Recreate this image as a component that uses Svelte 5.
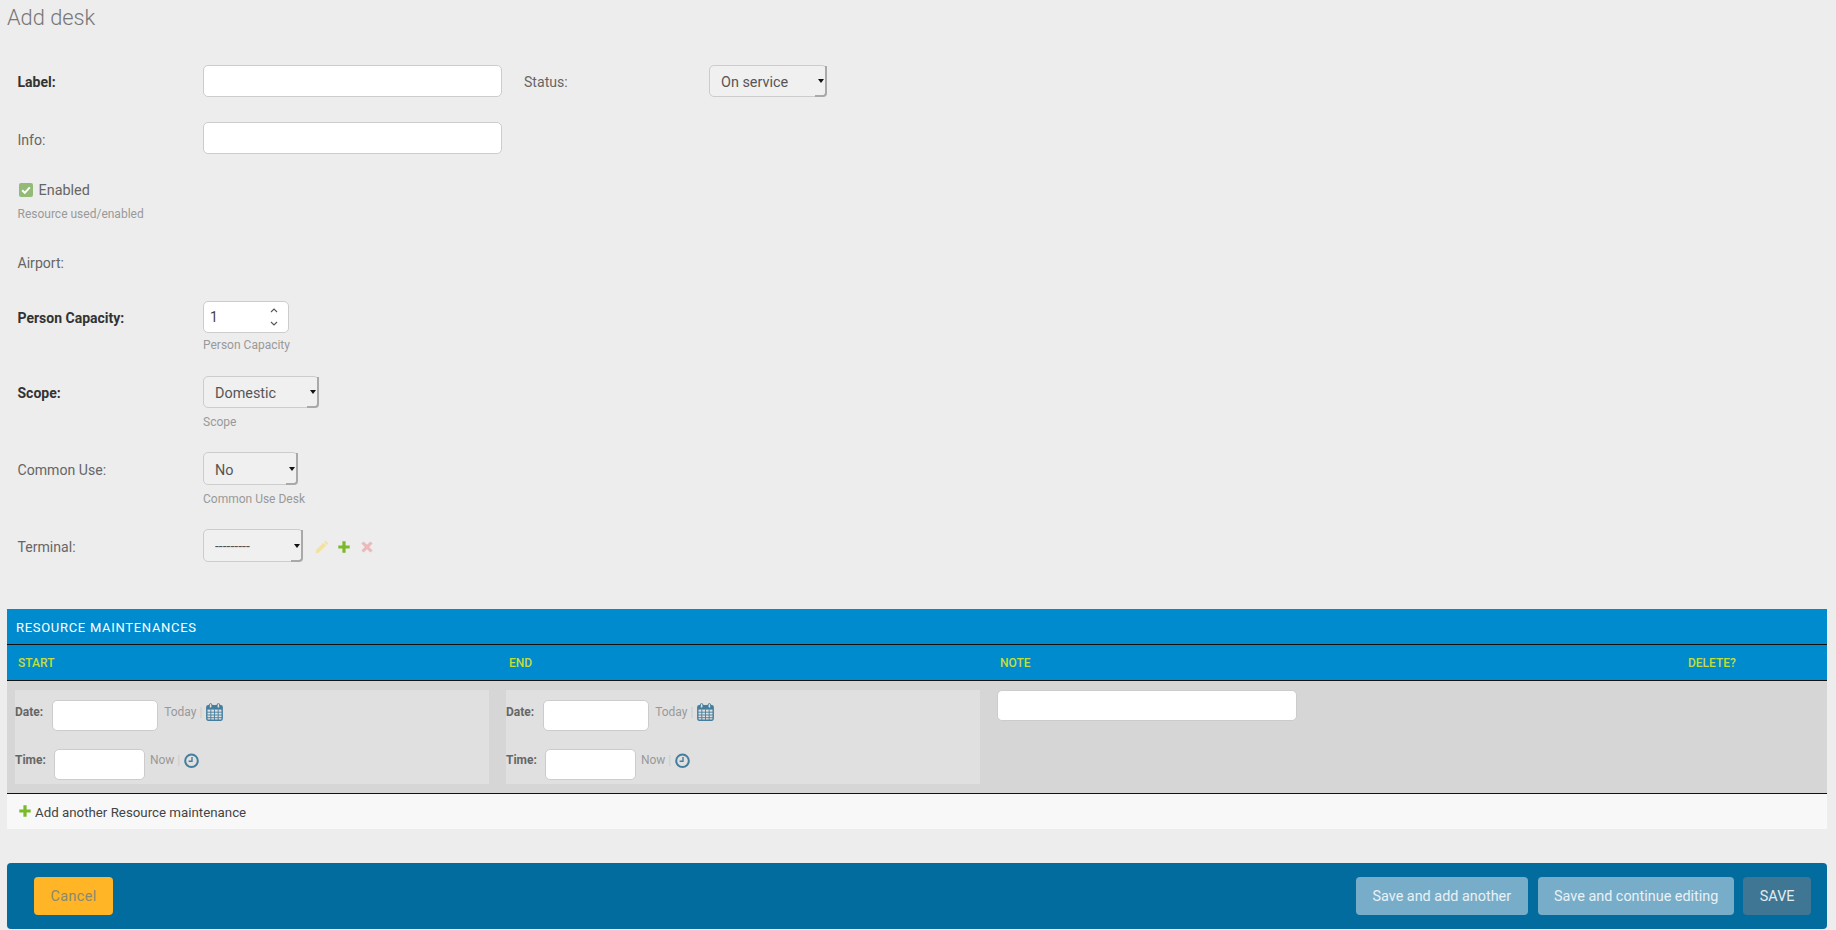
<script>
	const columns = ['Start', 'End', 'Note', 'Delete?'];
</script>

{#snippet plusIcon(size)}
	<svg class="plus" width={size} height={size} viewBox="0 0 12 12" aria-hidden="true">
		<path d="M4.4 0.3h3.2v4.1h4.1v3.2H7.6v4.1H4.4V7.6H0.3V4.4h4.1z" fill="#7ab929" />
	</svg>
{/snippet}

{#snippet dateTime()}
	<div class="panel">
		<div class="dt-line date-line">
			<span class="dt-label">Date:</span>
			<input class="date-input" type="text" />
			<span class="shortcut">Today</span>
			<span class="sep">|</span>
			<svg width="17" height="18" viewBox="0 0 17 18" aria-hidden="true">
				<rect x="0.8" y="2.8" width="15.4" height="14.4" rx="1.4" fill="none" stroke="#447e9e" stroke-width="1.4" />
				<rect x="1" y="3" width="15" height="3.6" fill="#447e9e" />
				<path d="M1 9.2h15M1 12h15M1 14.7h15M4.8 6.5v10.6M8.5 6.5v10.6M12.2 6.5v10.6" stroke="#447e9e" stroke-width="0.9" fill="none" />
				<rect x="3.3" y="0.6" width="2.6" height="4.4" rx="1.3" fill="#e0e0e0" stroke="#447e9e" stroke-width="1" />
				<rect x="11.1" y="0.6" width="2.6" height="4.4" rx="1.3" fill="#e0e0e0" stroke="#447e9e" stroke-width="1" />
			</svg>
		</div>
		<div class="dt-line time-line">
			<span class="dt-label">Time:</span>
			<input class="time-input" type="text" />
			<span class="shortcut">Now</span>
			<span class="sep">|</span>
			<svg width="15" height="16" viewBox="0 0 15 16" aria-hidden="true">
				<circle cx="7.5" cy="7.8" r="6.3" fill="none" stroke="#447e9e" stroke-width="2" />
				<path d="M8 4v4.3H4.6" fill="none" stroke="#447e9e" stroke-width="1.4" />
			</svg>
		</div>
	</div>
{/snippet}

<main class="page">
	<h1>Add desk</h1>

	<form class="desk-form">
		<div class="row label-row">
			<label class="field-label required" for="label">Label:</label>
			<input id="label" class="text-input" type="text" />
			<label class="field-label status-label" for="status">Status:</label>
			<div class="select status-select">
				<select id="status"><option>On service</option></select>
			</div>
		</div>

		<div class="row info-row">
			<label class="field-label" for="info">Info:</label>
			<input id="info" class="text-input" type="text" />
		</div>

		<div class="row check-row">
			<div class="check-line">
				<span class="checkbox">
					<svg width="14" height="14" viewBox="0 0 14 14" aria-hidden="true">
						<path d="M3.2 7.2l2.6 2.7 5-5.6" fill="none" stroke="#fff" stroke-width="2" />
					</svg>
				</span>
				<span class="check-text">Enabled</span>
			</div>
			<p class="help check-help">Resource used/enabled</p>
		</div>

		<div class="row airport-row">
			<span class="field-label">Airport:</span>
		</div>

		<div class="row capacity-row">
			<label class="field-label required" for="capacity">Person Capacity:</label>
			<div>
				<div class="number">
					<input id="capacity" type="text" value="1" />
					<svg class="spin" width="10" height="20" viewBox="0 0 10 20" aria-hidden="true">
						<path d="M2 5l3-3 3 3M2 15l3 3 3-3" fill="none" stroke="#555" stroke-width="1.1" />
					</svg>
				</div>
				<p class="help">Person Capacity</p>
			</div>
		</div>

		<div class="row scope-row">
			<label class="field-label required" for="scope">Scope:</label>
			<div>
				<div class="select scope-select">
					<select id="scope"><option>Domestic</option></select>
				</div>
				<p class="help">Scope</p>
			</div>
		</div>

		<div class="row common-row">
			<label class="field-label" for="common">Common Use:</label>
			<div>
				<div class="select common-select">
					<select id="common"><option>No</option></select>
				</div>
				<p class="help">Common Use Desk</p>
			</div>
		</div>

		<div class="row terminal-row">
			<label class="field-label" for="terminal">Terminal:</label>
			<div class="select terminal-select">
				<select id="terminal"><option>---------</option></select>
			</div>
			<div class="related">
				<svg width="14" height="14" viewBox="0 0 14 14" aria-hidden="true">
					<path d="M10.6 0.6l2.8 2.8-1.5 1.5-2.8-2.8zM8.4 2.8l2.8 2.8-7 7-3.6 0.8 0.8-3.6z" fill="#f1e2a4" />
				</svg>
				{@render plusIcon(12)}
				<svg class="remove" width="12" height="12" viewBox="0 0 12 12" aria-hidden="true">
					<path d="M2.6 0.4L6 3.8 9.4 0.4l2.2 2.2L8.2 6l3.4 3.4-2.2 2.2L6 8.2l-3.4 3.4-2.2-2.2L3.8 6 0.4 2.6z" fill="#ebb9b9" />
				</svg>
			</div>
		</div>

		<section class="inline-group">
			<h2>Resource maintenances</h2>
			<div class="grid head">
				{#each columns as column}
					<span>{column}</span>
				{/each}
			</div>
			<div class="grid body">
				<div class="cell">{@render dateTime()}</div>
				<div class="cell">{@render dateTime()}</div>
				<div class="cell note-cell"><input class="note-input" type="text" /></div>
				<div></div>
			</div>
			<div class="add-row">
				{@render plusIcon(12)}
				<span class="add-text">Add another Resource maintenance</span>
			</div>
		</section>

		<footer class="submit-row">
			<button class="btn cancel" type="button">Cancel</button>
			<div class="actions">
				<button class="btn secondary" type="button">Save and add another</button>
				<button class="btn secondary continue" type="button">Save and continue editing</button>
				<button class="btn primary" type="submit">SAVE</button>
			</div>
		</footer>
	</form>
</main>

<style>
	:global(body) {
		background: #ededed;
		font-family: Roboto, "Liberation Sans", sans-serif;
		font-size: 14px;
		color: #666;
	}

	.page {
		padding: 0 9px 0 7px;
		height: 930px;
		box-sizing: border-box;
		overflow: hidden;
	}

	h1 {
		margin: 0;
		height: 53px;
		font-size: 21.8px;
		font-weight: 300;
		line-height: 35px;
		color: #777;
	}

	.row {
		display: flex;
		align-items: flex-start;
		padding: 12px 0 12px 17.5px;
		margin: 0 -9px 0 -7px;
		border-bottom: 1px solid #eee;
	}

	.field-label {
		flex: 0 0 185.5px;
		height: 32px;
		font-size: 14.1px;
		line-height: 34px;
		color: #666;
	}

	.required {
		font-size: 14px;
		font-weight: 700;
		color: #333;
	}

	.info-row .field-label,
	.common-row .field-label {
		line-height: 36px;
	}

	.status-label {
		flex-basis: 185px;
		margin-left: 22px;
	}

	input,
	select {
		box-sizing: border-box;
		border: 1px solid #ccc;
		border-radius: 5px;
		font: inherit;
		margin: 0;
	}

	input {
		background: #fff;
		outline: none;
	}

	.text-input {
		width: 299px;
		height: 32px;
	}

	.help {
		margin: 5px 0 0;
		font-size: 12px;
		line-height: 14px;
		color: #999;
	}

	.capacity-row {
		padding-bottom: 11px;
	}

	.check-row {
		display: block;
		padding-top: 16px;
		padding-bottom: 11px;
	}

	.check-line {
		display: flex;
		align-items: center;
		gap: 6px;
		height: 14px;
		padding-left: 1px;
		font-size: 14.4px;
		line-height: 14px;
	}

	.check-text {
		padding-top: 2px;
	}

	.checkbox {
		display: block;
		width: 14px;
		height: 14px;
		border-radius: 2px;
		background: #93ba77;
	}

	.checkbox svg {
		display: block;
	}

	.check-help {
		margin-top: 10px;
	}

	.airport-row {
		padding: 14px 0 9px 17.5px;
	}

	.airport-row .field-label {
		line-height: 32px;
	}

	.number {
		position: relative;
		width: 86px;
	}

	.number input {
		display: block;
		width: 100%;
		height: 32px;
		padding: 0 6px;
		color: #444;
	}

	.spin {
		position: absolute;
		top: 6px;
		right: 10px;
	}

	.select {
		position: relative;
		height: 32px;
	}

	.select select {
		display: block;
		width: 100%;
		height: 100%;
		padding: 2px 11px 0;
		appearance: none;
		background: #f0f0f0;
		font-size: 14.4px;
		color: #555;
	}

	/* the dark edge and the little arrow sit over the select */
	.select::before {
		content: "";
		position: absolute;
		top: 1px;
		right: 0;
		bottom: 0;
		width: 10px;
		border-right: 2px solid #a9a9a9;
		border-bottom: 2px solid #a9a9a9;
		border-bottom-right-radius: 4px;
		pointer-events: none;
	}

	.select::after {
		content: "";
		position: absolute;
		top: 50%;
		right: 3px;
		margin-top: -2px;
		border: 3.5px solid transparent;
		border-top: 4px solid #111;
		border-bottom: 0;
		pointer-events: none;
	}

	.status-select {
		width: 118px;
	}

	.scope-select {
		width: 116px;
	}

	.common-select {
		width: 95px;
		height: 33px;
	}

	.common-select select {
		padding-top: 4px;
	}

	.terminal-select {
		width: 100px;
		height: 33px;
	}

	.terminal-select select {
		font-size: 14px;
		padding-top: 0;
	}

	.scope-row .help {
		margin-top: 7px;
	}

	.scope-row {
		padding-bottom: 10px;
	}

	.common-row .help {
		margin-top: 7px;
	}

	.common-row {
		padding-bottom: 10px;
	}

	.terminal-row {
		border-bottom: 0;
		padding-bottom: 44px;
	}

	.terminal-row .field-label {
		height: 33px;
		line-height: 36px;
	}

	.related {
		display: flex;
		align-items: center;
		gap: 9px;
		height: 36px;
		margin-left: 12px;
	}

	.related svg {
		display: block;
	}

	.related .remove {
		margin-left: 2px;
	}

	.inline-group h2 {
		margin: 0;
		height: 35px;
		padding-left: 9px;
		background: #008bcf;
		border-bottom: 1px solid #111;
		font-size: 13px;
		font-weight: 400;
		line-height: 37px;
		letter-spacing: 0.7px;
		text-transform: uppercase;
		color: #fff;
	}

	.grid {
		display: grid;
		grid-template-columns: 491px 491px 688px 1fr;
	}

	.head {
		height: 35px;
		background: #008bcf;
		border-bottom: 1px solid #111;
	}

	.head span {
		padding-left: 11px;
		font-size: 12px;
		font-weight: 500;
		line-height: 37px;
		text-transform: uppercase;
		color: #c6dc3c;
	}

	.body {
		height: 112px;
		background: #d6d6d6;
		border-bottom: 1px solid #111;
	}

	.cell {
		padding: 9px 9px 0 8px;
	}

	.note-cell {
		padding-left: 8px;
	}

	.panel {
		box-sizing: border-box;
		height: 94px;
		background: #e0e0e0;
	}

	.dt-line {
		display: flex;
		align-items: flex-start;
		font-size: 12px;
	}

	.date-line {
		padding-top: 10px;
		line-height: 24px;
	}

	.date-line svg {
		margin-top: 3px;
	}

	.time-line {
		padding-top: 18px;
		line-height: 22px;
	}

	.time-line svg {
		margin-top: 4px;
	}

	.dt-label {
		font-weight: 700;
		color: #666;
	}

	.date-input {
		width: 106px;
		height: 31px;
		margin: 0 6px 0 9px;
	}

	.time-input {
		width: 91px;
		height: 31px;
		margin: 0 5px 0 8px;
	}

	.shortcut {
		color: #999;
	}

	.sep {
		margin: 0 4px 0 3px;
		color: #ccc;
	}

	.dt-line svg {
		display: block;
	}

	.note-input {
		display: block;
		width: 300px;
		height: 31px;
	}

	.add-row {
		display: flex;
		align-items: center;
		gap: 4px;
		height: 35px;
		padding-left: 12px;
		background: #f8f8f8;
		font-size: 13.3px;
		color: #444;
	}

	.add-text {
		padding-top: 2px;
	}

	.add-row .plus {
		display: block;
		margin-top: -2px;
	}

	.submit-row {
		display: flex;
		justify-content: space-between;
		margin-top: 34px;
		padding: 14px 16px 14px 27px;
		background: #036c9f;
		border-radius: 4px;
	}

	.actions {
		display: flex;
		gap: 10px;
	}

	.btn {
		height: 38px;
		padding: 0 16px;
		border: 0;
		border-radius: 4px;
		font: inherit;
		font-size: 14.4px;
	}

	.cancel {
		padding: 0 16.5px;
		letter-spacing: 0.4px;
		background: #ffb526;
		color: #8a8872;
	}

	.secondary {
		background: #78adc9;
		color: #e8f1f5;
	}

	.secondary:not(.continue) {
		padding: 0 17px;
	}

	.primary {
		margin-left: -1px;
		padding: 0 16.5px;
		background: #3f7693;
		color: #e4ecf0;
	}
</style>
